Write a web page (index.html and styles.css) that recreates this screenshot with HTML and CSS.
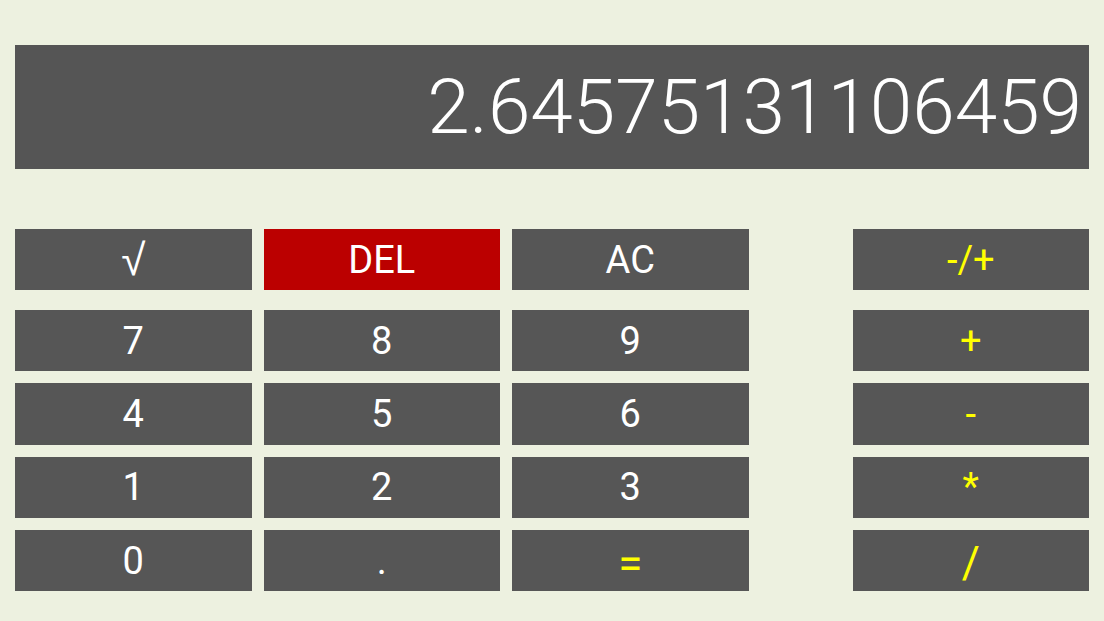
FILE: index.html
```html
<!DOCTYPE html>
<html lang="en">
<head>
<meta charset="utf-8">
<title>Calculator</title>
<link rel="stylesheet" href="styles.css">
</head>
<body>
<div class="calc">
  <div class="display">2.64575131106459</div>
  <div class="pad top">
    <button class="key sqrt">√</button>
    <button class="key del">DEL</button>
    <button class="key">AC</button>
    <button class="key op col5">-/+</button>
  </div>
  <div class="pad grid">
    <button class="key">7</button>
    <button class="key">8</button>
    <button class="key">9</button>
    <button class="key op col5">+</button>
    <button class="key">4</button>
    <button class="key">5</button>
    <button class="key">6</button>
    <button class="key op col5">-</button>
    <button class="key">1</button>
    <button class="key">2</button>
    <button class="key">3</button>
    <button class="key op col5">*</button>
    <button class="key">0</button>
    <button class="key">.</button>
    <button class="key op eq">=</button>
    <button class="key op col5 slash">/</button>
  </div>
</div>
</body>
</html>
```

FILE: styles.css
```css
html, body {
  margin: 0;
  padding: 0;
  background: #edf1e0;
}
body {
  font-family: "Liberation Sans", Arial, sans-serif;
}
.calc {
  padding: 45px 15px 0 15px;
}
.display {
  height: 124px;
  background: #555555;
  color: #ffffff;
  font-family: Roboto, "Liberation Sans", sans-serif;
  font-weight: 300;
  font-size: 76.5px;
  line-height: 124px;
  text-align: right;
  padding-right: 7px;
  box-sizing: border-box;
  white-space: nowrap;
  overflow: hidden;
}
.pad {
  display: grid;
  grid-template-columns: 1fr 1fr 1fr 80px 1fr;
  column-gap: 12px;
}
.top {
  margin-top: 60px;
  grid-template-rows: 61px;
}
.grid {
  margin-top: 20px;
  grid-template-rows: repeat(4, 61.33px);
  row-gap: 12px;
}
.key {
  border: 0;
  margin: 0;
  padding: 0;
  background: #565656;
  color: #ffffff;
  font-family: Roboto, "Liberation Sans", sans-serif;
  font-weight: 400;
  font-size: 38px;
  line-height: 1;
  display: flex;
  align-items: center;
  justify-content: center;
}
.sqrt {
  font-family: "Liberation Sans", Arial, sans-serif;
  font-size: 44px;
}
.eq {
  font-size: 44px;
  padding-top: 6px;
}
.slash {
  font-size: 44px;
  padding-top: 4px;
}
.del {
  background: #bb0000;
}
.op {
  color: #ffff00;
}
.col5 {
  grid-column: 5;
}
```
